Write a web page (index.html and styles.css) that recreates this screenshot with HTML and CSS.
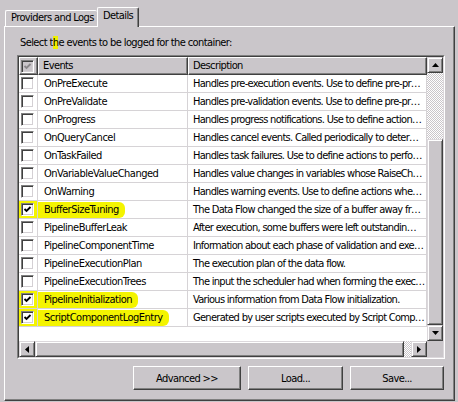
FILE: index.html
```html
<!DOCTYPE html>
<html>
<head>
<meta charset="utf-8">
<link rel="stylesheet" href="styles.css">
</head>
<body>
<div class="tabs">
  <div class="tab tab-first">Providers and Logs</div>
  <div class="tab tab-active">Details</div>
</div>
<div class="panel">
  <div class="caption">Select t<span class="mark">h</span>e events to be logged for the container:</div>
  <div class="frame">
    <div class="frame-in">
      <div class="main">
        <div class="list">
          <div class="row hdr">
            <div class="hcell hcheck"><span class="cb cb-dis"><svg width="9" height="9" viewBox="0 0 9 9"><polyline points="1.5,4 3.5,6 7.5,2" fill="none" stroke="#8a878a" stroke-width="1.8"/></svg></span></div>
            <div class="hcell">Events</div>
            <div class="hcell">Description</div>
          </div>
          <div class="row"><div class="cell ccheck"><span class="cb"></span></div><div class="cell">OnPreExecute</div><div class="cell">Handles pre-execution events. Use to define pre-pr…</div></div>
          <div class="row"><div class="cell ccheck"><span class="cb"></span></div><div class="cell">OnPreValidate</div><div class="cell">Handles pre-validation events. Use to define pre-pr…</div></div>
          <div class="row"><div class="cell ccheck"><span class="cb"></span></div><div class="cell">OnProgress</div><div class="cell">Handles progress notifications. Use to define action…</div></div>
          <div class="row"><div class="cell ccheck"><span class="cb"></span></div><div class="cell">OnQueryCancel</div><div class="cell">Handles cancel events. Called periodically to determ…</div></div>
          <div class="row"><div class="cell ccheck"><span class="cb"></span></div><div class="cell">OnTaskFailed</div><div class="cell">Handles task failures. Use to define actions to perfo…</div></div>
          <div class="row"><div class="cell ccheck"><span class="cb"></span></div><div class="cell">OnVariableValueChanged</div><div class="cell">Handles value changes in variables whose RaiseCha…</div></div>
          <div class="row"><div class="cell ccheck"><span class="cb"></span></div><div class="cell">OnWarning</div><div class="cell">Handles warning events. Use to define actions whe…</div></div>
          <div class="row hl"><div class="cell ccheck"><span class="cb"><svg width="9" height="9" viewBox="0 0 9 9"><polyline points="1.5,4 3.5,6 7.5,2" fill="none" stroke="#000" stroke-width="1.8"/></svg></span></div><div class="cell"><span class="hltext">BufferSizeTuning</span></div><div class="cell">The Data Flow changed the size of a buffer away fr…</div></div>
          <div class="row"><div class="cell ccheck"><span class="cb"></span></div><div class="cell">PipelineBufferLeak</div><div class="cell">After execution, some buffers were left outstandin…</div></div>
          <div class="row"><div class="cell ccheck"><span class="cb"></span></div><div class="cell">PipelineComponentTime</div><div class="cell">Information about each phase of validation and exe…</div></div>
          <div class="row"><div class="cell ccheck"><span class="cb"></span></div><div class="cell">PipelineExecutionPlan</div><div class="cell">The execution plan of the data flow.</div></div>
          <div class="row"><div class="cell ccheck"><span class="cb"></span></div><div class="cell">PipelineExecutionTrees</div><div class="cell">The input the scheduler had when forming the exec…</div></div>
          <div class="row hl"><div class="cell ccheck"><span class="cb"><svg width="9" height="9" viewBox="0 0 9 9"><polyline points="1.5,4 3.5,6 7.5,2" fill="none" stroke="#000" stroke-width="1.8"/></svg></span></div><div class="cell"><span class="hltext">PipelineInitialization</span></div><div class="cell">Various information from Data Flow initialization.</div></div>
          <div class="row hl"><div class="cell ccheck"><span class="cb"><svg width="9" height="9" viewBox="0 0 9 9"><polyline points="1.5,4 3.5,6 7.5,2" fill="none" stroke="#000" stroke-width="1.8"/></svg></span></div><div class="cell"><span class="hltext">ScriptComponentLogEntry</span></div><div class="cell">Generated by user scripts executed by Script Comp…</div></div>
        </div>
        <div class="vscroll">
          <div class="sbtn"><svg width="7" height="4" viewBox="0 0 7 4"><polygon points="3.5,0 7,4 0,4" fill="#000"/></svg></div>
          <div class="track vtrack"></div>
          <div class="thumb vthumb"></div>
          <div class="sbtn"><svg width="7" height="4" viewBox="0 0 7 4"><polygon points="0,0 7,0 3.5,4" fill="#000"/></svg></div>
        </div>
      </div>
      <div class="hbar">
        <div class="sbtn"><svg width="4" height="7" viewBox="0 0 4 7"><polygon points="4,0 4,7 0,3.5" fill="#000"/></svg></div>
        <div class="thumb hthumb"></div>
        <div class="track htrack"></div>
        <div class="sbtn"><svg width="4" height="7" viewBox="0 0 4 7"><polygon points="0,0 4,3.5 0,7" fill="#000"/></svg></div>
        <div class="corner"></div>
      </div>
    </div>
  </div>
  <div class="buttons">
    <div class="btn btn-adv">Advanced &gt;&gt;</div>
    <div class="btn btn-load">Load...</div>
    <div class="btn btn-save">Save...</div>
  </div>
</div>
</body>
</html>
```
FILE: styles.css
```css
* { box-sizing: border-box; }
html, body { margin: 0; padding: 0; }
body {
  width: 458px;
  height: 402px;
  overflow: hidden;
  background: #cac6ca;
  color: #000;
  font-family: "DejaVu Sans Condensed", "DejaVu Sans", sans-serif;
  font-size: 11px;
  letter-spacing: -0.6px;
}

/* tabs */
.tabs {
  display: flex;
  align-items: flex-end;
  height: 26px;
  padding-left: 5px;
  position: relative;
  z-index: 2;
}
.tab {
  height: 16px;
  padding-left: 5px;
  line-height: 14px;
  white-space: nowrap;
  overflow: hidden;
  background: #cac6ca;
  border-top: 1px solid #fff;
  border-left: 1px solid #fff;
  border-radius: 2px 2px 0 0;
}
.tab-first { width: 92px; }
.tab-active {
  width: 42px;
  height: 20px;
  margin-bottom: -1px;
  line-height: 15px;
  border-right: 1px solid #404040;
  box-shadow: inset -1px 0 #808080;
}

/* panel */
.panel {
  margin-left: 4px;
  width: 451px;
  height: 375px;
  border-top: 1px solid #fff;
  border-left: 1px solid #fff;
  border-right: 1px solid #404040;
  border-bottom: 1px solid #404040;
  box-shadow: inset -1px -1px #808080;
  padding: 0 10px 0 12px;
}
.caption {
  padding-top: 9px;
  padding-left: 3px;
  line-height: 13px;
  white-space: nowrap;
}
.mark { background: #f0f000; }

.frame {
  margin-top: 6px;
  width: 428px;
  height: 304px;
  border-top: 1px solid #808080;
  border-left: 1px solid #808080;
  border-right: 1px solid #fff;
  border-bottom: 1px solid #fff;
}
.frame-in {
  width: 426px;
  height: 302px;
  border-top: 1px solid #404040;
  border-left: 1px solid #404040;
  border-right: 1px solid #dcd8dc;
  border-bottom: 1px solid #dcd8dc;
}
.main { display: flex; height: 284px; }
.list { width: 408px; background: #fff; overflow: hidden; }

.row {
  display: grid;
  grid-template-columns: 19px 150px 239px;
  height: 18px;
}
.hcell {
  background: #cac6ca;
  border-top: 1px solid #fff;
  border-left: 1px solid #fff;
  border-right: 1px solid #404040;
  border-bottom: 1px solid #404040;
  box-shadow: inset -1px -1px #808080;
  padding-left: 4px;
  line-height: 15px;
  white-space: nowrap;
  overflow: hidden;
}
.hcheck { padding-left: 1px; display: flex; align-items: center; }
.cell {
  border-right: 1px solid #d6d3d6;
  border-bottom: 1px solid #d6d3d6;
  padding-left: 6px;
  line-height: 17px;
  white-space: nowrap;
  overflow: hidden;
  text-overflow: ellipsis;
}
.row .cell:nth-child(2) { letter-spacing: -0.5px; }
.row .cell:nth-child(3) { padding-left: 5px; letter-spacing: -0.7px; }
.ccheck { padding-left: 2px; display: flex; align-items: center; }

.cb {
  width: 13px;
  height: 13px;
  display: flex;
  align-items: center;
  justify-content: center;
  background: #fff;
  border-top: 1px solid #808080;
  border-left: 1px solid #808080;
  border-right: 1px solid #fff;
  border-bottom: 1px solid #fff;
  box-shadow: inset 1px 1px #404040, inset -1px -1px #d4d0d4;
}
.cb-dis { background: #cac6ca; }

.hl .ccheck { background: #f4f400; }
.hltext {
  display: inline-block;
  background: #f4f400;
  margin-left: -6px;
  padding: 0 6px;
  line-height: 16px;
  border-radius: 0 6px 6px 0;
}

/* scrollbars */
.vscroll { width: 16px; display: flex; flex-direction: column; }
.sbtn {
  width: 16px;
  height: 16px;
  flex: none;
  display: flex;
  align-items: center;
  justify-content: center;
  background: #cac6ca;
  border-top: 1px solid #dcd8dc;
  border-left: 1px solid #dcd8dc;
  border-right: 1px solid #404040;
  border-bottom: 1px solid #404040;
  box-shadow: inset 1px 1px #fff, inset -1px -1px #808080;
}
.track {
  background: repeating-conic-gradient(#fff 0 25%, #cac6ca 0 50%) 0 0 / 2px 2px;
}
.vtrack { height: 66px; flex: none; }
.thumb {
  background: #cac6ca;
  border-top: 1px solid #dcd8dc;
  border-left: 1px solid #dcd8dc;
  border-right: 1px solid #404040;
  border-bottom: 1px solid #404040;
  box-shadow: inset 1px 1px #fff, inset -1px -1px #808080;
}
.vthumb { flex: 1; }
.hbar { display: flex; height: 16px; }
.hthumb { width: 369px; }
.htrack { width: 7px; }
.corner { width: 16px; background: #cac6ca; }

/* buttons */
.buttons {
  display: flex;
  justify-content: flex-end;
  margin-top: 7px;
}
.btn {
  height: 24px;
  margin-left: 7px;
  display: flex;
  align-items: center;
  justify-content: center;
  background: #cac6ca;
  border-top: 1px solid #fff;
  border-left: 1px solid #fff;
  border-right: 1px solid #404040;
  border-bottom: 1px solid #404040;
  box-shadow: inset -1px -1px #808080;
}
.btn-adv { width: 108px; }
.btn-load { width: 95px; }
.btn-save { width: 94px; }
```
